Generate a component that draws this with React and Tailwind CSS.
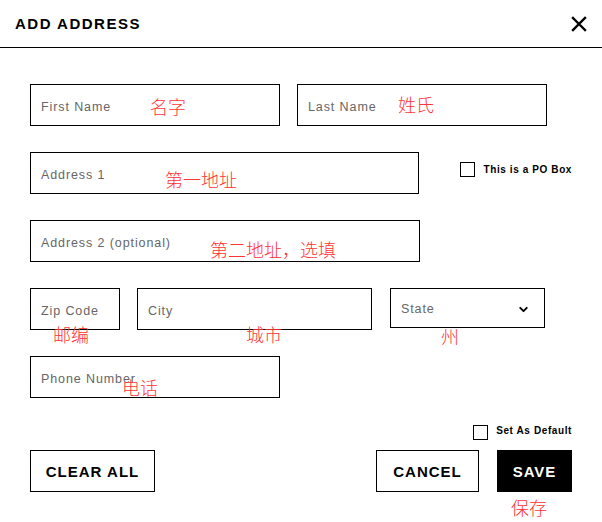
import { ChevronDown } from 'lucide-react';

const field =
  'h-[42px] border border-black flex items-center pl-[10px] text-[12.5px] tracking-[0.9px] text-[#666] pt-[4px]';

const notes = [
  { text: '名字', x: 150, y: 95 },
  { text: '姓氏', x: 398, y: 93 },
  { text: '第一地址', x: 165, y: 168 },
  { text: '第二地址，选填', x: 210, y: 238 },
  { text: '邮编', x: 53, y: 323 },
  { text: '城市', x: 246, y: 323 },
  { text: '州', x: 441, y: 325 },
  { text: '电话', x: 122, y: 376 },
  { text: '保存', x: 511, y: 496 },
];

function Field({ label, className = '' }) {
  return <div className={`${field} ${className}`}>{label}</div>;
}

export default function App() {
  return (
    <div
      className="relative w-[602px] h-[522px] bg-white text-black overflow-hidden"
      style={{ fontFamily: '"Liberation Sans", Arial, sans-serif' }}
    >
      <div className="h-[48px] flex items-center justify-between pl-[15px] pr-[15px] border-b border-black">
        <h1 className="text-[15px] font-bold tracking-[1.5px] mt-[2px]">ADD ADDRESS</h1>
        <svg width="16" height="16" viewBox="0 0 16 16" className="mt-[1px]">
          <path d="M2 2L14 14M14 2L2 14" stroke="black" strokeWidth="2.4" strokeLinecap="square" />
        </svg>
      </div>

      <div className="px-[30px] pt-[36px] flex flex-col">
        <div className="flex gap-[17px]">
          <Field label="First Name" className="w-[250px]" />
          <Field label="Last Name" className="w-[250px]" />
        </div>

        <div className="flex mt-[26px]">
          <Field label="Address 1" className="w-[390px]" />
          <label className="flex items-start ml-[41px] mt-[10px] gap-[8px]">
            <span className="w-[15px] h-[15px] border border-black shrink-0" />
            <span className="text-[10px] font-bold tracking-[0.6px] leading-[15px] whitespace-nowrap">
              This is a PO Box
            </span>
          </label>
        </div>

        <Field label="Address 2 (optional)" className="w-[390px] mt-[26px]" />

        <div className="flex mt-[26px] items-start">
          <Field label="Zip Code" className="w-[90px]" />
          <Field label="City" className="w-[235px] ml-[17px]" />
          <div className={`${field} !h-[40px] w-[155px] ml-[18px] justify-between pr-[14px] !pt-[2px]`}>
            <span>State</span>
            <ChevronDown size={13} strokeWidth={3.5} className="text-black" />
          </div>
        </div>

        <Field label="Phone Number" className="w-[250px] mt-[26px]" />

        <div className="flex justify-end items-start gap-[8px] mt-[27px] h-[16px]">
          <span className="w-[15px] h-[15px] border border-black" />
          <span className="text-[10px] font-bold tracking-[0.6px] leading-[12px]">Set As Default</span>
        </div>

        <div className="flex items-center mt-[9px]">
          <button className="w-[125px] h-[42px] border border-black text-[15px] font-bold tracking-[1px] pt-[3px]">
            CLEAR ALL
          </button>
          <button className="ml-auto w-[103px] h-[42px] border border-black text-[15px] font-bold tracking-[1px] pt-[3px]">
            CANCEL
          </button>
          <button className="ml-[18px] w-[75px] h-[42px] bg-black text-white text-[15px] font-bold tracking-[1px] pt-[3px]">
            SAVE
          </button>
        </div>
      </div>

      {notes.map((n) => (
        <span
          key={n.text}
          className="absolute text-[18px] leading-[22px] text-[#ff3333] font-light whitespace-nowrap"
          style={{ left: n.x, top: n.y, fontFamily: '"Noto Sans CJK SC", sans-serif' }}
        >
          {n.text}
        </span>
      ))}
    </div>
  );
}
